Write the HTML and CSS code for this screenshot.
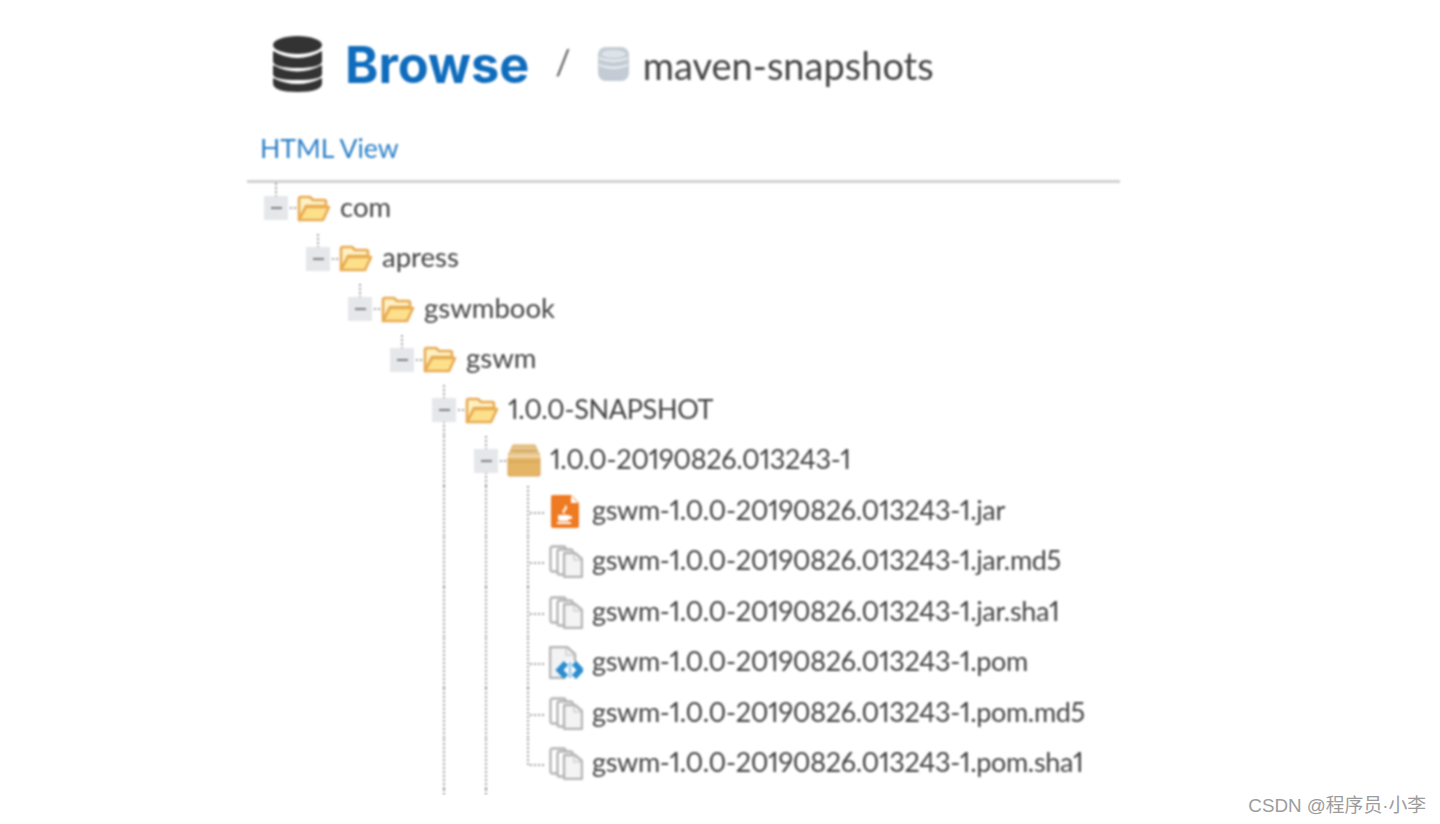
FILE: index.html
```html
<!DOCTYPE html>
<html lang="en">
<head>
    <meta charset="UTF-8">
    <title>Browse maven-snapshots</title>
    <link rel="stylesheet" href="styles.css">
</head>
<body>
    <svg class="sprite" width="0" height="0">
        <symbol id="folder" viewBox="0 0 34 27">
            <path d="M2 25 V4 Q2 2 4 2 H13 L16 5 H27 Q29 5 29 7 V11 H9 L2 25 Z" fill="#fdf0c4" stroke="#e8ab52" stroke-width="2.6" stroke-linejoin="round"/>
            <path d="M2 25 L9 12 H32 L26 25 Z" fill="#fde08c" stroke="#e8ab52" stroke-width="2.6" stroke-linejoin="round"/>
        </symbol>
        <symbol id="package" viewBox="0 0 34 33">
            <path d="M6 1 H28 L33 12 H1 Z" fill="#e6c48a" stroke="#d9a961" stroke-width="1"/>
            <rect x="5" y="6" width="24" height="1.6" fill="#cf9f58"/>
            <rect x="1" y="13" width="32" height="19" rx="1" fill="#e5b566" stroke="#d6a455" stroke-width="1"/>
            <rect x="1" y="11.5" width="32" height="2" fill="#f6e3bb"/>
            <rect x="1" y="17" width="32" height="1.4" fill="#d5a558"/>
        </symbol>
        <symbol id="jar" viewBox="0 0 28 33">
            <path d="M2 0 H20 L28 8 V31 Q28 33 26 33 H2 Q0 33 0 31 V2 Q0 0 2 0 Z" fill="#ee7a22"/>
            <path d="M20 1 L27 8 H20 Z" fill="#fff"/>
            <path d="M14 9 Q18 13 14 16 Q12 18 15 20 Q10 18 12 15 Q15 12 14 9 Z" fill="#fff"/>
            <path d="M7 20 H18 V24 Q18 26 15 26 H10 Q7 26 7 24 Z M18 21 H21 V24 H18 Z" fill="#fff"/>
            <rect x="6" y="27" width="14" height="2" fill="#fff"/>
        </symbol>
        <symbol id="files" viewBox="0 0 34 33">
            <rect x="1.5" y="1.5" width="15" height="25" rx="2" fill="#fff" stroke="#b4b4b4" stroke-width="2.4"/>
            <rect x="8.5" y="4.5" width="15" height="25" rx="2" fill="#fff" stroke="#b4b4b4" stroke-width="2.4"/>
            <path d="M16 8 H26 L33 14 V31 Q33 32 32 32 H16 Q15 32 15 31 V9 Q15 8 16 8 Z" fill="#f4f4f4" stroke="#b4b4b4" stroke-width="2.4"/>
            <path d="M25 9 V15 H32" fill="none" stroke="#cfcfcf" stroke-width="1.5"/>
        </symbol>
        <symbol id="pom" viewBox="0 0 34 33">
            <path d="M2 1 H18 L26 8 V31 Q26 32 25 32 H2 Q1 32 1 31 V2 Q1 1 2 1 Z" fill="#f2f3f4" stroke="#b4b4b4" stroke-width="2.4"/>
            <path d="M17 2 V9 H25" fill="none" stroke="#cfcfcf" stroke-width="1.5"/>
            <path d="M8 24 L17 15 H25 L34 24 L25 33 H17 Z" fill="#fff"/>
            <path d="M17 17 L10.5 24 L17 31 M25 17 L31.5 24 L25 31" fill="none" stroke="#2b8ccf" stroke-width="6"/>
            <rect x="19.6" y="16" width="2.8" height="16" fill="#9fcdea"/>
        </symbol>
    </svg>

    <div class="page">
        <header class="title-bar">
            <svg class="db-icon" viewBox="0 0 49 56">
                <ellipse cx="24.5" cy="9" rx="24.5" ry="9" fill="#333"/>
                <path d="M0 15 Q24.5 29 49 15 V25 Q49 32 24.5 32 Q0 32 0 25 Z" fill="#333"/>
                <path d="M0 29 Q24.5 42 49 29 V38 Q49 44 24.5 44 Q0 44 0 38 Z" fill="#333"/>
                <path d="M0 42 Q24.5 54 49 42 V47 Q49 56 24.5 56 Q0 56 0 47 Z" fill="#333"/>
            </svg>
            <h1 class="browse">Browse</h1>
            <span class="slash">/</span>
            <svg class="repo-icon" viewBox="0 0 31 34">
                <rect x="0" y="0" width="31" height="34" rx="8" fill="#c3ccd4"/>
                <ellipse cx="15.5" cy="7" rx="12" ry="4" fill="#dde3e8"/>
                <path d="M1 11 Q15.5 17 30 11 M1 18 Q15.5 24 30 18" fill="none" stroke="#eef1f4" stroke-width="1.8"/>
            </svg>
            <span class="repo-name">maven-snapshots</span>
        </header>

        <nav class="view-links"><a href="#">HTML View</a></nav>

        <div class="tree">
            <div class="node">
                <span class="joint stub"><span class="expander"><i></i></span><span class="dash"></span></span>
                <svg class="icon"><use href="#folder"/></svg><span class="label">com</span>
            </div>
            <div class="node">
                <span class="indent"></span>
                <span class="joint stub"><span class="expander"><i></i></span><span class="dash"></span></span>
                <svg class="icon"><use href="#folder"/></svg><span class="label">apress</span>
            </div>
            <div class="node">
                <span class="indent"></span><span class="indent"></span>
                <span class="joint stub"><span class="expander"><i></i></span><span class="dash"></span></span>
                <svg class="icon"><use href="#folder"/></svg><span class="label">gswmbook</span>
            </div>
            <div class="node">
                <span class="indent"></span><span class="indent"></span><span class="indent"></span>
                <span class="joint stub"><span class="expander"><i></i></span><span class="dash"></span></span>
                <svg class="icon"><use href="#folder"/></svg><span class="label">gswm</span>
            </div>
            <div class="node">
                <span class="indent"></span><span class="indent"></span><span class="indent"></span><span class="indent"></span>
                <span class="joint through"><span class="expander"><i></i></span><span class="dash"></span></span>
                <svg class="icon"><use href="#folder"/></svg><span class="label tight">1.0.0-SNAPSHOT</span>
            </div>
            <div class="node">
                <span class="indent"></span><span class="indent"></span><span class="indent"></span><span class="indent"></span><span class="indent guide"></span>
                <span class="joint through"><span class="expander"><i></i></span><span class="dash"></span></span>
                <svg class="icon"><use href="#package"/></svg><span class="label tight">1.0.0-20190826.013243-1</span>
            </div>
            <div class="node">
                <span class="indent"></span><span class="indent"></span><span class="indent"></span><span class="indent"></span><span class="indent guide"></span><span class="indent guide"></span>
                <span class="joint through leaf"><span class="dash"></span></span>
                <svg class="icon icon-jar"><use href="#jar"/></svg><span class="label tight">gswm-1.0.0-20190826.013243-1.jar</span>
            </div>
            <div class="node">
                <span class="indent"></span><span class="indent"></span><span class="indent"></span><span class="indent"></span><span class="indent guide"></span><span class="indent guide"></span>
                <span class="joint through leaf"><span class="dash"></span></span>
                <svg class="icon"><use href="#files"/></svg><span class="label tight">gswm-1.0.0-20190826.013243-1.jar.md5</span>
            </div>
            <div class="node">
                <span class="indent"></span><span class="indent"></span><span class="indent"></span><span class="indent"></span><span class="indent guide"></span><span class="indent guide"></span>
                <span class="joint through leaf"><span class="dash"></span></span>
                <svg class="icon"><use href="#files"/></svg><span class="label tight">gswm-1.0.0-20190826.013243-1.jar.sha1</span>
            </div>
            <div class="node">
                <span class="indent"></span><span class="indent"></span><span class="indent"></span><span class="indent"></span><span class="indent guide"></span><span class="indent guide"></span>
                <span class="joint through leaf"><span class="dash"></span></span>
                <svg class="icon"><use href="#pom"/></svg><span class="label tight">gswm-1.0.0-20190826.013243-1.pom</span>
            </div>
            <div class="node">
                <span class="indent"></span><span class="indent"></span><span class="indent"></span><span class="indent"></span><span class="indent guide"></span><span class="indent guide"></span>
                <span class="joint through leaf"><span class="dash"></span></span>
                <svg class="icon"><use href="#files"/></svg><span class="label tight">gswm-1.0.0-20190826.013243-1.pom.md5</span>
            </div>
            <div class="node">
                <span class="indent"></span><span class="indent"></span><span class="indent"></span><span class="indent"></span><span class="indent guide"></span><span class="indent guide"></span>
                <span class="joint elbow leaf"><span class="dash"></span></span>
                <svg class="icon"><use href="#files"/></svg><span class="label tight">gswm-1.0.0-20190826.013243-1.pom.sha1</span>
            </div>
            <div class="node tail">
                <span class="indent"></span><span class="indent"></span><span class="indent"></span><span class="indent"></span><span class="indent guide"></span><span class="indent guide"></span>
            </div>
        </div>
    </div>

    <div class="watermark">CSDN @程序员·小李</div>
</body>
</html>
```

FILE: styles.css
```css
body {
    margin: 0;
    background: #fff;
    font-family: Lato, "Noto Sans", sans-serif;
    font-variant-numeric: proportional-nums;
    color: #444;
}
.sprite {
    display: block;
}
.page {
    width: 873px;
    margin-left: 247px;
    filter: blur(0.8px);
}

/* header */
.title-bar {
    display: flex;
    align-items: center;
    height: 128px;
    padding-left: 26px;
    box-sizing: border-box;
}
.db-icon {
    width: 49px;
    height: 56px;
    flex: none;
}
.browse {
    margin: 0 0 0 23px;
    font-family: Inter, Lato, sans-serif;
    font-size: 50.5px;
    font-weight: 700;
    color: #0f6cbd;
}
.slash {
    margin: 0 0 6px 26px;
    font-size: 34px;
    color: #666;
}
.repo-icon {
    width: 31px;
    height: 34px;
    margin-left: 27px;
    flex: none;
}
.repo-name {
    margin: 2px 0 0 14px;
    font-size: 38px;
}
.view-links {
    height: 52px;
    padding-left: 13px;
    border-bottom: 3px solid #cfd1d3;
    font-size: 26.6px;
    line-height: 40px;
}
.view-links a {
    color: #2a7fc6;
    text-decoration: none;
}

/* tree */
.tree {
    padding-left: 17px;
}
.node {
    display: flex;
    align-items: center;
    height: 50.5px;
}
.node.tail {
    height: 6px;
}
.indent {
    align-self: stretch;
    width: 42px;
    flex: none;
}
.indent.guide {
    background: repeating-linear-gradient(#a0a0a0 0 2px, transparent 2px 4px) 11px 0 / 2px 100% no-repeat;
}
.joint {
    display: flex;
    align-items: center;
    align-self: stretch;
    width: 33px;
    flex: none;
}
.joint.stub {
    background: repeating-linear-gradient(#a0a0a0 0 2px, transparent 2px 4px) 11px 0 / 2px 14px no-repeat;
}
.joint.through {
    background: repeating-linear-gradient(#a0a0a0 0 2px, transparent 2px 4px) 11px 0 / 2px 100% no-repeat;
}
.joint.elbow {
    background: repeating-linear-gradient(#a0a0a0 0 2px, transparent 2px 4px) 11px 0 / 2px 55% no-repeat;
}
.expander {
    display: flex;
    align-items: center;
    justify-content: center;
    width: 24px;
    height: 24px;
    background: #e5e7ea;
}
.expander i {
    width: 11px;
    height: 2px;
    background: #808080;
}
.dash {
    flex: 1;
    height: 2px;
    margin: 0 1px 0 2px;
    background: repeating-linear-gradient(90deg, #a0a0a0 0 2px, transparent 2px 4px);
}
.leaf .dash {
    margin: 3px 3px 0 14px;
}
.icon {
    width: 34px;
    height: 33px;
    flex: none;
}
.icon-jar {
    margin-left: -1px;
    margin-right: 1px;
}
.label {
    margin: 0 0 4px 9px;
    font-size: 27.5px;
    white-space: nowrap;
}
.label.tight {
    font-size: 27px;
    letter-spacing: -0.34px;
}

.watermark {
    position: absolute;
    right: 14px;
    bottom: 7px;
    font-family: "Liberation Sans", "Noto Sans CJK SC", sans-serif;
    font-size: 18.8px;
    color: #9c9c9c;
}
```
